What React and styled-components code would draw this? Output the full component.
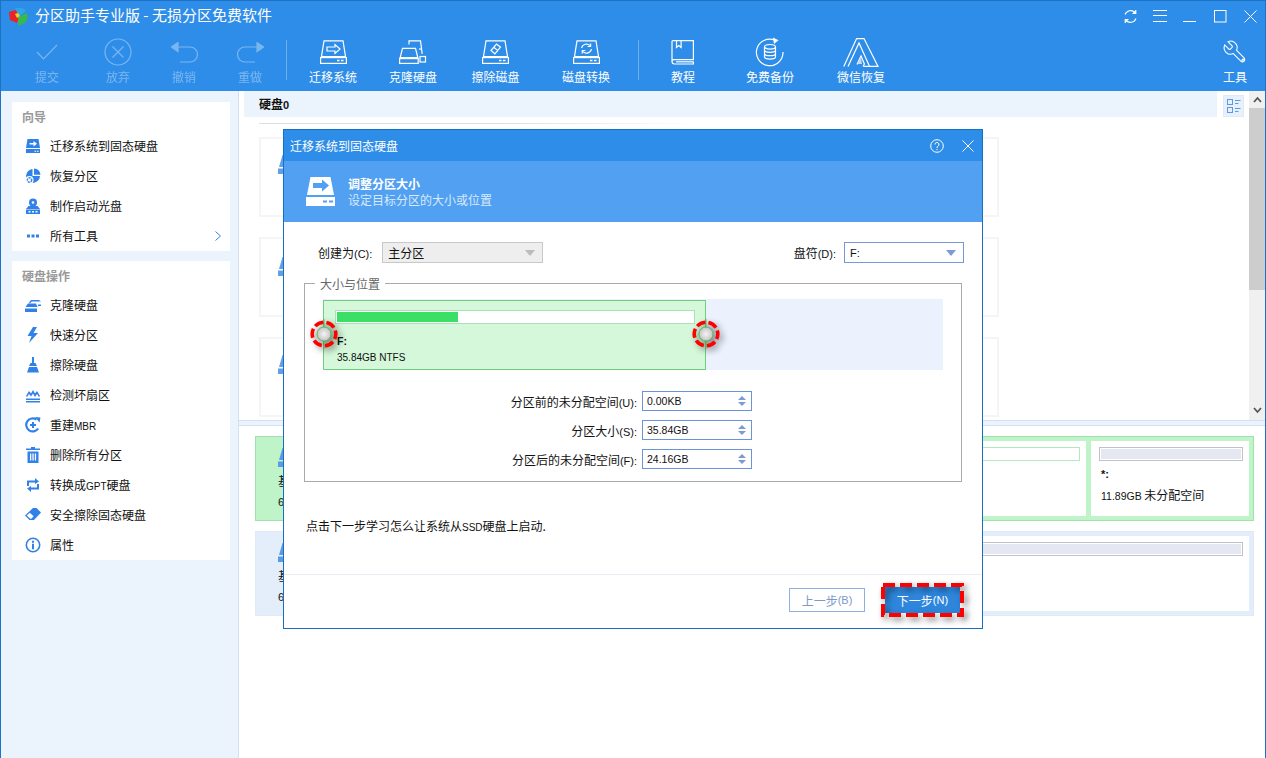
import React from "react";
import styled, { createGlobalStyle } from "styled-components";

const BLUE = "#2e8de8";
const ICON = "#3081e8";

const Global = createGlobalStyle`
  html, body { margin: 0; padding: 0; background: #fff; }
  * { box-sizing: border-box; }
  body {
    font-family: "Noto Sans CJK SC", "Liberation Sans", sans-serif;
    font-size: 12px;
    color: #111;
  }
`;

const Window = styled.div`
  position: relative;
  width: 1266px;
  height: 758px;
  overflow: hidden;
  display: flex;
  flex-direction: column;
  border-top: 1px solid #1c73c6;
  border-left: 1px solid #1c73c6;
  border-right: 1px solid #1c73c6;
  background: #fff;
`;
const Head = styled.header`
  height: 90px;
  flex: none;
  background: ${BLUE};
  color: #fff;
  display: flex;
  flex-direction: column;
`;
const TitleBar = styled.div`
  height: 32px;
  flex: none;
  display: flex;
  align-items: center;
  padding-left: 7px;
`;
const AppTitle = styled.div`
  font-size: 15px;
  line-height: 20px;
  margin: 0 0 4px 6px;
  white-space: pre;
`;
const WinControls = styled.div`
  margin-left: auto;
  display: flex;
  margin-top: -2px;
`;
const WinButton = styled.div`
  width: 30px;
  height: 20px;
  display: flex;
  align-items: center;
  justify-content: center;
`;
const Toolbar = styled.div`
  flex: 1;
  display: flex;
  padding-left: 11px;
`;
const ToolItem = styled.div`
  width: ${(p) => p.$w}px;
  flex: none;
  display: flex;
  flex-direction: column;
  align-items: center;
  padding-top: 4px;
  opacity: ${(p) => (p.$off ? 0.36 : 1)};
  margin-left: ${(p) => (p.$push ? "auto" : "0")};
`;
const ToolIcon = styled.div`
  height: 30px;
  display: flex;
  align-items: center;
  justify-content: center;
`;
const ToolLabel = styled.div`
  margin-top: 3px;
  line-height: 14px;
  font-size: 12px;
  white-space: nowrap;
`;
const ToolDivider = styled.div`
  width: 1px;
  flex: none;
  height: 40px;
  margin: 7px ${(p) => p.$right || 0}px 0 ${(p) => p.$left || 0}px;
  background: rgba(255, 255, 255, 0.32);
`;

const Main = styled.div`
  flex: 1;
  display: flex;
  min-height: 0;
`;
const Sidebar = styled.aside`
  width: 238px;
  flex: none;
  background: #ebf3fd;
  border-right: 1px solid #d5dfef;
  padding: 11px 8px 0 11px;
  display: flex;
  flex-direction: column;
  gap: 10px;
`;
const SideCard = styled.section`
  background: #fff;
  display: flex;
  flex-direction: column;
`;
const SideHeading = styled.h3`
  margin: 0;
  height: 29px;
  line-height: 30px;
  padding-left: 10px;
  font-size: 12px;
  font-weight: 700;
  color: #999;
`;
const SideItem = styled.div`
  height: 30px;
  display: flex;
  align-items: center;
  padding-left: 13px;
  gap: 9px;
  white-space: nowrap;
`;
const SideText = styled.span`
  margin-bottom: 2px;
`;
const SideChevron = styled.span`
  margin-left: auto;
  margin-right: 9px;
  display: flex;
`;
const Lat = styled.span`
  font-family: "Liberation Sans", sans-serif;
  font-size: ${(p) => p.$s || 11}px;
`;

const Work = styled.div`
  flex: 1;
  min-width: 0;
  display: flex;
  flex-direction: column;
`;
const Upper = styled.div`
  height: 329px;
  flex: none;
  display: flex;
`;
const UpperContent = styled.div`
  flex: 1;
  min-width: 0;
  display: flex;
  flex-direction: column;
`;
const DiskHeader = styled.div`
  display: flex;
  height: 26px;
  flex: none;
  padding-left: 5px;
`;
const DiskBand = styled.div`
  width: 973px;
  background: #ebf3fd;
  padding-left: 15px;
  line-height: 26px;
  font-weight: 700;
`;
const ViewToggle = styled.div`
  width: 21px;
  height: 22px;
  margin: 4px 0 0 6px;
  background: #e8f0fb;
  border: 1px solid #e2e9f5;
  display: flex;
  align-items: center;
  justify-content: center;
`;
const HeadRule = styled.div`
  height: 1px;
  width: 440px;
  margin: 6px 0 0 20px;
  background: linear-gradient(90deg, #d5e0ea 55%, rgba(213, 224, 234, 0));
`;
const DiskStack = styled.div`
  display: flex;
  flex-direction: column;
  gap: 20px;
  margin: 13px 0 0 20px;
`;
const DiskRow = styled.div`
  width: 740px;
  height: 80px;
  border: 2px solid #f5f5f5;
  padding: ${(p) => p.$top || 16}px 0 0 17px;
`;
const Scrollbar = styled.div`
  width: 16px;
  flex: none;
  background: #f0f0f0;
  display: flex;
  flex-direction: column;
`;
const ScrollCap = styled.div`
  height: ${(p) => p.$h || 17}px;
  flex: none;
  display: flex;
  align-items: center;
  justify-content: center;
`;
const ScrollThumb = styled.div`
  height: 182px;
  flex: none;
  background: #cdcdcd;
`;
const ScrollSpace = styled.div`
  flex: 1;
`;
const Splitter = styled.div`
  height: 6px;
  flex: none;
  background: #ebf3fd;
  border-top: 1px solid #d5dfef;
  border-bottom: 1px solid #d5dfef;
`;
const Lower = styled.div`
  flex: 1;
  padding: 10px 0 0 16px;
  display: flex;
  flex-direction: column;
  gap: 10px;
`;
const DiskCard = styled.div`
  width: 999px;
  height: ${(p) => p.$h}px;
  flex: none;
  display: flex;
  gap: 5px;
  padding: 4px;
  background: ${(p) => (p.$green ? "#bff4c8" : "#e4eefb")};
  border: 1px solid ${(p) => (p.$green ? "#a3e0b0" : "#e0e9f7")};
`;
const DiskInfo = styled.div`
  flex: 1;
  padding: ${(p) => p.$top || 7}px 0 0 18px;
  display: flex;
  flex-direction: column;
`;
const DiskInfoIcon = styled.div`
  height: 19px;
  margin-bottom: 5px;
  display: flex;
`;
const InfoLine = styled.div`
  height: 20px;
  line-height: 18px;
  white-space: nowrap;
`;
const Partition = styled.div`
  width: ${(p) => p.$w}px;
  flex: none;
  background: #fff;
  padding: 6px 6px 0 8px;
`;
const PartBar = styled.div`
  height: 14px;
  border: 1px solid ${(p) => (p.$green ? "#b6e8c0" : "#bfc2c9")};
  background: ${(p) => (p.$green ? "#fff" : "#e5e8f0")};
  box-shadow: inset 0 0 0 1px #fff;
`;
const PartLabel = styled.div`
  margin: 5px 0 0 2px;
  height: 14px;
  line-height: 14px;
  font-weight: 700;
`;
const PartSize = styled.div`
  margin: 8px 0 0 2px;
  line-height: 14px;
  white-space: nowrap;
`;

/* Dialog */
const Dialog = styled.div`
  position: absolute;
  left: 282px;
  top: 128px;
  width: 700px;
  height: 500px;
  background: #fff;
  border: 1px solid #1670c0;
  display: flex;
  flex-direction: column;
`;
const DialogTitle = styled.div`
  height: 31px;
  flex: none;
  background: ${BLUE};
  color: #fff;
  display: flex;
  align-items: center;
  padding: 0 6px 0 6px;
  line-height: 14px;
`;
const DialogTools = styled.div`
  margin-left: auto;
  display: flex;
  align-items: center;
  gap: 18px;
  padding-right: 2px;
`;
const Banner = styled.div`
  height: 61px;
  flex: none;
  background: #52a0f2;
  color: #fff;
  display: flex;
  align-items: center;
  padding-left: 22px;
  gap: 13px;
`;
const BannerText = styled.div`
  display: flex;
  flex-direction: column;
  line-height: 16px;
`;
const BannerTitle = styled.div`
  font-weight: 700;
`;
const BannerSub = styled.div`
  color: #d9eafc;
`;
const DialogBody = styled.div`
  flex: 1;
  padding: 20px 18px 0 20px;
  display: flex;
  flex-direction: column;
`;
const TopRow = styled.div`
  display: flex;
  justify-content: space-between;
  align-items: center;
  padding-left: 14px;
  height: 21px;
  flex: none;
`;
const LabelGroup = styled.div`
  display: flex;
  align-items: center;
  gap: ${(p) => p.$gap}px;
  white-space: nowrap;
`;
const Select = styled.div`
  width: ${(p) => p.$w}px;
  height: 21px;
  display: flex;
  align-items: center;
  justify-content: space-between;
  padding: 0 7px 0 5px;
  background: ${(p) => (p.$off ? "#eeeeee" : "#fff")};
  border: 1px solid ${(p) => (p.$off ? "#c8c8c8" : "#7598d8")};
`;
const Caret = styled.span`
  width: 0;
  height: 0;
  border-left: 5px solid transparent;
  border-right: 5px solid transparent;
  border-top: 6px solid ${(p) => (p.$off ? "#bcbcbc" : "#7b9ad6")};
`;
const SizeGroup = styled.div`
  position: relative;
  margin-top: 20px;
  width: 658px;
  height: 199px;
  flex: none;
  border: 1px solid #aaa;
  padding: 15px 18px 0 18px;
`;
const GroupLegend = styled.div`
  position: absolute;
  left: 10px;
  top: -8px;
  padding: 0 5px;
  background: #fff;
  color: #666;
  line-height: 15px;
`;
const Track = styled.div`
  height: 71px;
  background: #ebf2fd;
  padding-top: 1px;
`;
const Slab = styled.div`
  position: relative;
  width: 383px;
  height: 70px;
  background: #d4f8d9;
  border: 1px solid #6fcf7f;
  padding: 9px 10px 0 11px;
`;
const SlabBar = styled.div`
  height: 14px;
  background: #fff;
  border: 1px solid #a9e2b6;
  padding: 1px;
`;
const SlabFill = styled.div`
  height: 100%;
  background: #3bdf66;
`;
const SlabDrive = styled.div`
  margin: 9px 0 0 2px;
  line-height: 14px;
  font-weight: 700;
`;
const SlabSize = styled.div`
  margin: 1px 0 0 2px;
  line-height: 14px;
`;
const Handle = styled.div`
  position: absolute;
  top: 33px;
  left: ${(p) => (p.$end ? "100%" : "0")};
  transform: translate(-50%, -50%);
  margin-left: ${(p) => (p.$end ? 1 : 0)}px;
  width: 44px;
  height: 44px;
`;
const Fields = styled.div`
  margin-top: 21px;
  width: 429px;
  display: flex;
  flex-direction: column;
  gap: 9px;
`;
const FieldRow = styled.div`
  display: flex;
  justify-content: flex-end;
  align-items: center;
  gap: 5px;
  height: 20px;
`;
const Spin = styled.div`
  width: 110px;
  height: 20px;
  border: 1px solid #6a94d8;
  display: flex;
  align-items: center;
  justify-content: space-between;
  padding: 0 5px 0 4px;
`;
const SpinArrows = styled.div`
  display: flex;
  flex-direction: column;
  gap: 2px;
`;
const SpinUp = styled.span`
  width: 0;
  height: 0;
  border-left: 4px solid transparent;
  border-right: 4px solid transparent;
  border-bottom: 4px solid #7b9ad6;
`;
const SpinDown = styled(SpinUp)`
  border-bottom: 0;
  border-top: 4px solid #7b9ad6;
`;
const Note = styled.div`
  margin: 36px 0 0 2px;
  line-height: 16px;
`;
const DialogFooter = styled.div`
  height: 54px;
  flex: none;
  border-top: 1px solid #e6edf4;
  display: flex;
  justify-content: flex-end;
  align-items: center;
  gap: 16px;
  padding: 0 18px 3px 0;
`;
const GhostButton = styled.div`
  width: 76px;
  height: 24px;
  display: flex;
  align-items: center;
  justify-content: center;
  border: 1px solid #8fb0dc;
  color: #7c9ac6;
`;
const PrimaryWrap = styled.div`
  position: relative;
  width: 83px;
  height: 34px;
  padding: 4px;
`;
const PrimaryButton = styled.div`
  height: 100%;
  background: #2e86dc;
  color: #fff;
  display: flex;
  align-items: center;
  justify-content: center;
`;
const DashFrame = styled.svg`
  position: absolute;
  left: -6px;
  top: -6px;
  pointer-events: none;
`;

/* Toolbar icons */
const S = { fill: "none", stroke: "#fff", strokeWidth: 1.2 };
const DriveBase = ({ w = 27 }) => (
  <g {...S}>
    <path d={`M4 .8h${w - 8}L${w - 1.5} 16.5H1.5z`} />
    <rect x=".6" y="17.6" width={w - 1.2} height="5.8" />
    <path d={`M${w - 10} 20.5h2.5M${w - 6} 20.5h2.5`} strokeWidth="1.5" />
  </g>
);
const MigrateIcon = () => (
  <svg width="27" height="24" viewBox="0 0 27 24">
    <DriveBase />
    <path d="M7 7h8V4.5l5 4.5-5 4.5V11H7z" {...S} />
  </svg>
);
const CloneIcon = () => (
  <svg width="28" height="24" viewBox="0 0 28 24">
    <g {...S}>
      <path d="M10 4.5V.8h11.5l1.7 13" />
      <path d="M3.5 8.8h13L18.8 18H1.2z" transform="translate(0 -.5)" />
      <rect x=".6" y="18.6" width="18.6" height="4.8" />
      <rect x="21" y="16.5" width="5.5" height="5.5" />
      <path d="M20 9h3" />
    </g>
  </svg>
);
const EraseIcon = () => (
  <svg width="27" height="24" viewBox="0 0 27 24">
    <DriveBase />
    <g {...S}>
      <path d="M9 10.5l5.5-6.5 4 3.2-5.6 6.6z" />
      <path d="M11.7 7.2l4 3.2" />
    </g>
  </svg>
);
const ConvertIcon = () => (
  <svg width="27" height="24" viewBox="0 0 27 24">
    <DriveBase />
    <g {...S}>
      <path d="M8.5 8a5 5 0 0 1 8.5-2.4" />
      <path d="M18.5 9a5 5 0 0 1-8.5 2.6" />
      <path d="M17.6 3.5v3h-3M9.3 13.5v-3h3" />
    </g>
  </svg>
);
const BookIcon = () => (
  <svg width="24" height="25" viewBox="0 0 24 25">
    <g {...S}>
      <path d="M1 21V1.6Q1 .6 2 .6h20.4v19H3.4Q1 19.6 1 21.6q0 2.4 2.4 2.4h19v-2.4" />
      <path d="M5.5 1v6.5l2.3-2 2.3 2V1" />
      <path d="M5 21.8h17" />
    </g>
  </svg>
);
const BackupIcon = () => (
  <svg width="30" height="30" viewBox="0 0 30 30">
    <g {...S}>
      <path d="M20 3.2A13.3 13.3 0 1 0 28 15" />
      <ellipse cx="15" cy="9.8" rx="5.5" ry="2.3" />
      <path d="M9.5 9.8v10c0 1.3 2.5 2.3 5.5 2.3s5.5-1 5.5-2.3v-10M9.5 13c0 1.3 2.5 2.3 5.5 2.3s5.5-1 5.5-2.3M9.5 16.4c0 1.3 2.5 2.3 5.5 2.3s5.5-1 5.5-2.3" />
    </g>
    <path d="M18 .5l5.5 2.8L19 7z" fill="#fff" />
  </svg>
);
const WechatIcon = () => (
  <svg width="36" height="29" viewBox="0 0 36 29">
    <g {...S}>
      <path d="M.8 28.4L13.6.6h7.4L35 28.4H20.5" />
      <path d="M5 28.4L16 5l10.6 23.4" />
      <path d="M14 26.4l4-8.4 3.4 8-1.4 2.4" />
    </g>
    <path d="M14.5 26l3.5-7 1 7z" fill="#bcd9f7" />
  </svg>
);
const WrenchIcon = () => (
  <svg width="26" height="26" viewBox="0 0 24 24">
    <g {...S} strokeWidth="1" transform="matrix(-1 0 0 1 24 0)">
      <path d="M14.7 6.3a1 1 0 0 0 0 1.4l1.6 1.6a1 1 0 0 0 1.4 0l3.77-3.77a6 6 0 0 1-7.94 7.94l-6.91 6.91a2.12 2.12 0 0 1-3-3l6.91-6.91a6 6 0 0 1 7.94-7.94l-3.76 3.76z" />
      <circle cx="4.6" cy="19.6" r="1" />
    </g>
  </svg>
);

const Logo = () => (
  <svg width="21" height="18" viewBox="0 0 21 18">
    <path d="M7 1a8 8 0 0 1 11 2l-8 6z" fill="#2da6e6" />
    <path d="M1 4l7-2 3 7-2 6-7-3z" fill="#e8242a" />
    <path d="M10 9l9-4q2 6-2 10l-7 3z" fill="#38b850" />
    <path d="M7 6l3-1 2 3-3 2z" fill="#f0d020" />
  </svg>
);

/* Sidebar icons */
const SI = ({ children }) => (
  <svg width="16" height="16" viewBox="0 0 16 16" fill={ICON}>
    {children}
  </svg>
);
const iconMigrate = (
  <SI>
    <path d="M2.5 1h11L15 10H1z" />
    <path d="M1 11h14v4H1z" />
    <path d="M4.5 5h4V3l3.5 2.7L8.500 8.400V6.500h-4z" fill="#fff" />
    <path d="M9.500 12.700h1.600v1H9.500zM12 12.700h1.600v1H12z" fill="#fff" />
  </SI>
);
const iconRecover = (
  <SI>
    <path d="M7.500 1v7H15a7.500 7.500 0 0 1-7 7 7.500 7.500 0 0 1-7-7 7.500 7.500 0 0 1 6.500-7z" />
    <path d="M9 0.500a7 7 0 0 1 6.500 6.200H9z" />
    <circle cx="4.500" cy="12" r="4" fill="#fff" />
    <circle cx="4.500" cy="12" r="2.200" fill="none" stroke={ICON} strokeWidth="1.400" strokeDasharray="2 .8" />
  </SI>
);
const iconBoot = (
  <SI>
    <circle cx="8" cy="4.500" r="4" />
    <circle cx="8" cy="4.500" r="1.300" fill="#fff" />
    <path d="M3.500 8h9L15 11H1z" />
    <path d="M1 11.500h14V16H1z" />
    <path d="M3.500 13h2v1.500h-2zM7 13h2v1.500H7zM10.500 13h2v1.500h-2z" fill="#fff" />
  </SI>
);
const iconDots = (
  <SI>
    <path d="M2 6.500h3v3H2zM6.500 6.500h3v3h-3zM11 6.500h3v3h-3z" />
  </SI>
);
const iconClone = (
  <SI>
    <path d="M4 5.500L6 3h8l2 1.500H6.500L5 6.500z" />
    <path d="M3 6.500h8l1.500 3.500H0.500z" />
    <path d="M0 11.500h12V15H0z" />
    <path d="M13 7.500h3.500v1.500H13z" />
  </SI>
);
const iconFlash = (
  <SI>
    <path d="M8 0L2.500 9h4L4 16l9-10H8.500L12 0z" />
  </SI>
);
const iconBroom = (
  <SI>
    <path d="M7 0h2v6H7z" />
    <path d="M5.500 6h5L12 9H4z" />
    <path d="M4 10h8l2 5.500H2z" />
  </SI>
);
const iconScan = (
  <SI>
    <path d="M1 9l3-5 2 2.500L8 3l2 3.500L12 4l3 5-1 1-2-3-2 3-2-3.500L6 9.500 4 7l-2 3z" />
    <path d="M1 11.500h14V13H1zM1 14h14v1.500H1z" />
  </SI>
);
const iconRebuild = (
  <SI>
    <path d="M13.200 11.500A6.500 6.500 0 1 1 11.500 2.600" fill="none" stroke={ICON} strokeWidth="2.200" />
    <path d="M10 0l5.500.5-1 5z" />
    <path d="M5 7h2V5h2v2h2v2H9v2H7V9H5z" />
  </SI>
);
const iconTrash = (
  <SI>
    <path d="M6 0h4v1.500h5V3H1V1.500h5z" />
    <path d="M2.500 4.500h11V16h-11z" />
    <path d="M5 6.500h1.300v7H5zM7.400 6.500h1.300v7H7.400zM9.800 6.500h1.300v7H9.800z" fill="#fff" />
  </SI>
);
const iconConvert = (
  <SI>
    <path d="M2 3.500h8V1l4 3.500L10 7V5.500H4V9H2z" />
    <path d="M14 12.500H6V15l-4-3.500L6 9v1.500h6V7h2z" />
  </SI>
);
const iconEraser = (
  <SI>
    <path d="M0 8.500L8 1h3.500L16 5.500 9 13H4.500z" />
    <path d="M5.300 11.700L1.800 8.500l3-2.800 3.800 3.500-2.300 2.500z" fill="#fff" />
  </SI>
);
const iconInfo = (
  <SI>
    <circle cx="8" cy="8" r="6.700" fill="none" stroke={ICON} strokeWidth="1.600" />
    <path d="M7 3.700h2v2H7zM7 6.800h2v5.500H7z" />
  </SI>
);

const DiskGlyph = ({ op = 1 }) => (
  <svg width="27" height="19" viewBox="0 0 27 19" opacity={op}>
    <path d="M4.500 0h18L26 12H1z" fill="#5b9ae6" />
    <path d="M0 13.500h27V19H0z" fill="#5b9ae6" />
  </svg>
);

const guide = [
  [iconMigrate, "迁移系统到固态硬盘"],
  [iconRecover, "恢复分区"],
  [iconBoot, "制作启动光盘"],
];
const ops = [
  [iconClone, <>克隆硬盘</>],
  [iconFlash, <>快速分区</>],
  [iconBroom, <>擦除硬盘</>],
  [iconScan, <>检测坏扇区</>],
  [iconRebuild, <>重建<Lat $s={10}>MBR</Lat></>],
  [iconTrash, <>删除所有分区</>],
  [iconConvert, <>转换成<Lat $s={10}>GPT</Lat>硬盘</>],
  [iconEraser, <>安全擦除固态硬盘</>],
  [iconInfo, <>属性</>],
];

const RingHandle = ({ end }) => (
  <Handle $end={end}>
    <svg width="44" height="44" viewBox="0 0 44 44" style={{ filter: "drop-shadow(3px 3px 3px rgba(0,0,0,.45))" }}>
      <defs>
        <radialGradient id="knob">
          <stop offset="0" stopColor="#f4f4f4" />
          <stop offset="1" stopColor="#c4c4c4" />
        </radialGradient>
      </defs>
      <path d="M22 7v30" stroke="#5cb85c" strokeWidth="1" />
      <circle cx="22" cy="22" r="7" fill="url(#knob)" stroke="#5cb85c" strokeWidth="1" />
      <circle cx="22" cy="22" r="11.800" fill="none" stroke="#f00" strokeWidth="3.600" strokeDasharray="9.200 3.150" strokeDashoffset="4" />
    </svg>
  </Handle>
);

export default function App() {
  return (
    <>
      <Global />
      <Window>
        <Head>
          <TitleBar>
            <Logo />
            <AppTitle>分区助手专业版 - 无损分区免费软件</AppTitle>
            <WinControls>
              <WinButton>
                <svg width="15" height="15" viewBox="0 0 15 15" fill="none" stroke="#fff" strokeWidth="1.100">
                  <path d="M2 5.500A6 6 0 0 1 12 3.500" />
                  <path d="M13 9.500A6 6 0 0 1 3 11.500" />
                  <path d="M12.800 1v3.500H9.500M2.200 14v-3.500h3.300" fill="#fff" />
                </svg>
              </WinButton>
              <WinButton>
                <svg width="14" height="12" viewBox="0 0 14 12" stroke="#fff" strokeWidth="1">
                  <path d="M0 .5h14M0 5.500h14M0 11.500h14" />
                </svg>
              </WinButton>
              <WinButton>
                <svg width="14" height="14" viewBox="0 0 14 14" stroke="#fff" strokeWidth="1">
                  <path d="M0 12.500h13" />
                </svg>
              </WinButton>
              <WinButton>
                <svg width="13" height="13" viewBox="0 0 13 13" fill="none" stroke="#fff" strokeWidth="1">
                  <rect x=".5" y=".5" width="11.500" height="11.500" />
                </svg>
              </WinButton>
              <WinButton>
                <svg width="13" height="13" viewBox="0 0 13 13" fill="none" stroke="#fff" strokeWidth="1">
                  <path d="M.5.5l12 12M12.500.5l-12 12" />
                </svg>
              </WinButton>
            </WinControls>
          </TitleBar>
          <Toolbar>
            <ToolItem $w={70} $off>
              <ToolIcon>
                <svg width="22" height="16" viewBox="0 0 22 16" {...S}>
                  <path d="M1 8l6.500 7L21 1" />
                </svg>
              </ToolIcon>
              <ToolLabel>提交</ToolLabel>
            </ToolItem>
            <ToolItem $w={72} $off>
              <ToolIcon>
                <svg width="28" height="28" viewBox="0 0 28 28" {...S}>
                  <circle cx="14" cy="14" r="13" />
                  <path d="M8.500 8.500l11 11M19.500 8.500l-11 11" />
                </svg>
              </ToolIcon>
              <ToolLabel>放弃</ToolLabel>
            </ToolItem>
            <ToolItem $w={60} $off>
              <ToolIcon>
                <svg width="27" height="21" viewBox="0 0 27 21" {...S}>
                  <path d="M3 5h16a7.400 7.400 0 0 1 0 15H9" />
                  <path d="M7 .5v9L.5 5z" fill="#fff" />
                </svg>
              </ToolIcon>
              <ToolLabel>撤销</ToolLabel>
            </ToolItem>
            <ToolItem $w={72} $off>
              <ToolIcon>
                <svg width="27" height="21" viewBox="0 0 27 21" {...S}>
                  <path d="M24 5H8a7.400 7.400 0 0 0 0 15h10" />
                  <path d="M20 .5v9L26.500 5z" fill="#fff" />
                </svg>
              </ToolIcon>
              <ToolLabel>重做</ToolLabel>
            </ToolItem>
            <ToolDivider />
            <ToolItem $w={92}>
              <ToolIcon><MigrateIcon /></ToolIcon>
              <ToolLabel>迁移系统</ToolLabel>
            </ToolItem>
            <ToolItem $w={68}>
              <ToolIcon><CloneIcon /></ToolIcon>
              <ToolLabel>克隆硬盘</ToolLabel>
            </ToolItem>
            <ToolItem $w={97}>
              <ToolIcon><EraseIcon /></ToolIcon>
              <ToolLabel>擦除磁盘</ToolLabel>
            </ToolItem>
            <ToolItem $w={84}>
              <ToolIcon><ConvertIcon /></ToolIcon>
              <ToolLabel>磁盘转换</ToolLabel>
            </ToolItem>
            <ToolDivider $left={10} />
            <ToolItem $w={88}>
              <ToolIcon><BookIcon /></ToolIcon>
              <ToolLabel>教程</ToolLabel>
            </ToolItem>
            <ToolItem $w={86}>
              <ToolIcon><BackupIcon /></ToolIcon>
              <ToolLabel>免费备份</ToolLabel>
            </ToolItem>
            <ToolItem $w={96}>
              <ToolIcon><WechatIcon /></ToolIcon>
              <ToolLabel>微信恢复</ToolLabel>
            </ToolItem>
            <ToolItem $w={60} $push>
              <ToolIcon><WrenchIcon /></ToolIcon>
              <ToolLabel>工具</ToolLabel>
            </ToolItem>
          </Toolbar>
        </Head>
        <Main>
          <Sidebar>
            <SideCard>
              <SideHeading>向导</SideHeading>
              {guide.map(([ic, t]) => (
                <SideItem key={t}>{ic}<SideText>{t}</SideText></SideItem>
              ))}
              <SideItem>
                {iconDots}
                <SideText>所有工具</SideText>
                <SideChevron>
                  <svg width="6" height="10" viewBox="0 0 6 10" fill="none" stroke={ICON} strokeWidth="1">
                    <path d="M.5.5L5.500 5 .5 9.500" />
                  </svg>
                </SideChevron>
              </SideItem>
            </SideCard>
            <SideCard>
              <SideHeading>硬盘操作</SideHeading>
              {ops.map(([ic, t], i) => (
                <SideItem key={i}>{ic}<SideText>{t}</SideText></SideItem>
              ))}
            </SideCard>
          </Sidebar>
          <Work>
            <Upper>
              <UpperContent>
                <DiskHeader>
                  <DiskBand>硬盘<Lat>0</Lat></DiskBand>
                  <ViewToggle>
                    <svg width="14" height="14" viewBox="0 0 14 14" fill="none" stroke="#5b9ae6" strokeWidth="1">
                      <rect x=".5" y=".5" width="5" height="5" />
                      <rect x=".5" y="8.500" width="5" height="5" />
                      <path d="M8 1.500h5.500M8 4.500h3.500M8 9.500h5.500M8 12.500h3.500" />
                    </svg>
                  </ViewToggle>
                </DiskHeader>
                <HeadRule />
                <DiskStack>
                  <DiskRow><DiskGlyph op={0.95} /></DiskRow>
                  <DiskRow $top={18}><DiskGlyph op={0.95} /></DiskRow>
                  <DiskRow><DiskGlyph op={0.95} /></DiskRow>
                </DiskStack>
              </UpperContent>
              <Scrollbar>
                <ScrollCap>
                  <svg width="9" height="7" viewBox="0 0 9 7" fill="none" stroke="#555" strokeWidth="1.800">
                    <path d="M1 6l3.500-4L8 6" />
                  </svg>
                </ScrollCap>
                <ScrollThumb />
                <ScrollSpace />
                <ScrollCap $h={20}>
                  <svg width="9" height="7" viewBox="0 0 9 7" fill="none" stroke="#555" strokeWidth="1.800">
                    <path d="M1 1l3.500 4L8 1" />
                  </svg>
                </ScrollCap>
              </Scrollbar>
            </Upper>
            <Splitter />
            <Lower>
              <DiskCard $green $h={85}>
                <DiskInfo>
                  <DiskInfoIcon><DiskGlyph /></DiskInfoIcon>
                  <InfoLine>基本<Lat>MBR</Lat></InfoLine>
                  <InfoLine><Lat>60.00GB</Lat></InfoLine>
                </DiskInfo>
                <Partition $w={181}>
                  <PartBar $green />
                  <PartLabel><Lat>D:</Lat></PartLabel>
                  <PartSize><Lat $s={10}>48.11GB NTFS</Lat></PartSize>
                </Partition>
                <Partition $w={158}>
                  <PartBar />
                  <PartLabel><Lat>*:</Lat></PartLabel>
                  <PartSize><Lat $s={10.500}>11.89GB</Lat> 未分配空间</PartSize>
                </Partition>
              </DiskCard>
              <DiskCard $h={85}>
                <DiskInfo>
                  <DiskInfoIcon><DiskGlyph /></DiskInfoIcon>
                  <InfoLine>基本<Lat>MBR</Lat></InfoLine>
                  <InfoLine><Lat>60.00GB</Lat></InfoLine>
                </DiskInfo>
                <Partition $w={700}>
                  <PartBar />
                </Partition>
              </DiskCard>
            </Lower>
          </Work>
        </Main>

        <Dialog>
          <DialogTitle>
            迁移系统到固态硬盘
            <DialogTools>
              <svg width="14" height="14" viewBox="0 0 14 14" fill="none" stroke="#fff" strokeWidth="1">
                <circle cx="7" cy="7" r="6.300" />
                <path d="M5 5.500a2 2 0 1 1 3 1.700c-.8.500-1 .9-1 1.800M7 10v1.200" />
              </svg>
              <svg width="12" height="12" viewBox="0 0 12 12" fill="none" stroke="#fff" strokeWidth="1">
                <path d="M.5.5l11 11M11.500.5l-11 11" />
              </svg>
            </DialogTools>
          </DialogTitle>
          <Banner>
            <svg width="29" height="29" viewBox="0 0 29 29" fill="#fff">
              <path d="M4.500 0h20L28 18H1z" />
              <path d="M0 20h29v9H0z" />
              <path d="M7 6h9V2.500l7 6-7 6V11H7z" fill="#52a0f2" />
              <path d="M17 23.500h4v2h-4zM23 23.500h4v2h-4z" fill="#52a0f2" />
            </svg>
            <BannerText>
              <BannerTitle>调整分区大小</BannerTitle>
              <BannerSub>设定目标分区的大小或位置</BannerSub>
            </BannerText>
          </Banner>
          <DialogBody>
            <TopRow>
              <LabelGroup $gap={10}>
                <span>创建为<Lat>(C):</Lat></span>
                <Select $w={161} $off>
                  <span>主分区</span>
                  <Caret $off />
                </Select>
              </LabelGroup>
              <LabelGroup $gap={8}>
                <span>盘符<Lat>(D):</Lat></span>
                <Select $w={120}>
                  <Lat>F:</Lat>
                  <Caret />
                </Select>
              </LabelGroup>
            </TopRow>
            <SizeGroup>
              <GroupLegend>大小与位置</GroupLegend>
              <Track>
                <Slab>
                  <SlabBar>
                    <SlabFill style={{ width: `${(121 / 356) * 100}%` }} />
                  </SlabBar>
                  <SlabDrive><Lat $s={10.500}>F:</Lat></SlabDrive>
                  <SlabSize><Lat $s={10}>35.84GB NTFS</Lat></SlabSize>
                  <RingHandle />
                  <RingHandle end />
                </Slab>
              </Track>
              <Fields>
                <FieldRow>
                  <span>分区前的未分配空间<Lat>(U):</Lat></span>
                  <Spin>
                    <Lat $s={10.500}>0.00KB</Lat>
                    <SpinArrows><SpinUp /><SpinDown /></SpinArrows>
                  </Spin>
                </FieldRow>
                <FieldRow>
                  <span>分区大小<Lat>(S):</Lat></span>
                  <Spin>
                    <Lat $s={10.500}>35.84GB</Lat>
                    <SpinArrows><SpinUp /><SpinDown /></SpinArrows>
                  </Spin>
                </FieldRow>
                <FieldRow>
                  <span>分区后的未分配空间<Lat>(F):</Lat></span>
                  <Spin>
                    <Lat $s={10.500}>24.16GB</Lat>
                    <SpinArrows><SpinUp /><SpinDown /></SpinArrows>
                  </Spin>
                </FieldRow>
              </Fields>
            </SizeGroup>
            <Note>点击下一步学习怎么让系统从<Lat $s={10}>SSD</Lat>硬盘上启动.</Note>
          </DialogBody>
          <DialogFooter>
            <GhostButton>上一步<Lat>(B)</Lat></GhostButton>
            <PrimaryWrap>
              <PrimaryButton>下一步<Lat>(N)</Lat></PrimaryButton>
              <DashFrame width="100" height="50" viewBox="0 0 100 50" style={{ filter: "drop-shadow(3px 3px 3px rgba(0,0,0,.55))" }}>
                <rect x="8" y="8" width="79" height="30" fill="none" stroke="#f00" strokeWidth="4" strokeDasharray="12 5" />
              </DashFrame>
            </PrimaryWrap>
          </DialogFooter>
        </Dialog>
      </Window>
    </>
  );
}
